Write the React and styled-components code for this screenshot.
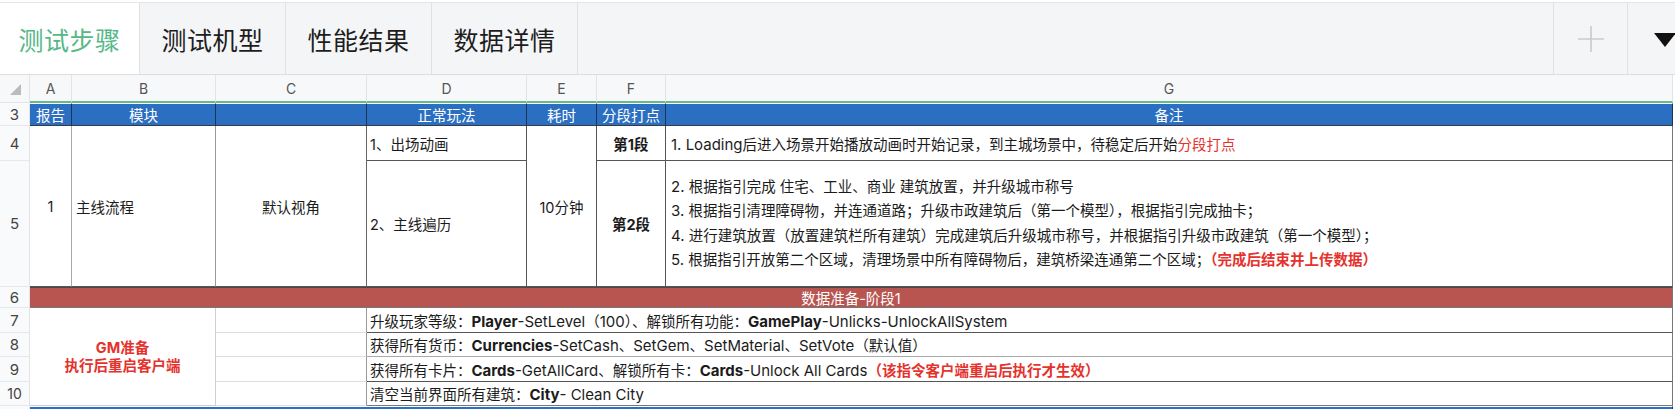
import React from 'react';
import styled, { createGlobalStyle } from 'styled-components';

const GlobalStyle = createGlobalStyle`
  html, body {
    margin: 0;
    padding: 0;
    background: #fff;
  }
  body {
    font-family: Inter, "Noto Sans CJK SC", sans-serif;
    overflow: hidden;
  }
`;

const Page = styled.div`
  width: 1675px;
  height: 409px;
  overflow: hidden;
  background: #fff;
  padding-top: 2px;
  box-sizing: border-box;
`;

/* ---------- sheet tabs ---------- */

const TabBar = styled.div`
  display: flex;
  height: 73px;
  box-sizing: border-box;
  border-top: 1px solid #e4e5e7;
  border-bottom: 1px solid #dcdddf;
  background: #f4f5f7;
`;

const Tab = styled.div`
  width: ${p => p.$w}px;
  flex: none;
  box-sizing: border-box;
  display: flex;
  align-items: center;
  justify-content: center;
  border-right: 1px solid #e0e1e4;
  background: ${p => (p.$active ? '#fff' : '#f4f5f7')};
  color: ${p => (p.$active ? '#55b888' : '#1d1d1d')};
  font-family: "Noto Sans CJK SC", sans-serif;
  font-size: 25px;
  letter-spacing: 0.5px;
`;

const TabFill = styled.div`
  flex: 1;
  border-right: 1px solid #e0e1e4;
`;

const AddTab = styled.div`
  width: 74px;
  flex: none;
  box-sizing: border-box;
  border-right: 1px solid #e0e1e4;
  display: flex;
  align-items: center;
  justify-content: center;
`;

const MenuTab = styled.div`
  width: 47px;
  flex: none;
  display: flex;
  align-items: center;
  padding-left: 26px;
  box-sizing: border-box;
`;

const DownArrow = styled.div`
  width: 0;
  height: 0;
  border-left: 11px solid transparent;
  border-right: 11px solid transparent;
  border-top: 14px solid #111;
  margin-top: 2px;
`;

/* ---------- grid ---------- */

const Sheet = styled.div`
  display: grid;
  grid-template-columns: 30px 42px 144px 151px 160px 70px 69px 1007px;
  grid-template-rows: 28px 23px 35px 126px 21px 25px 24px 25px 24px 24px;
  font-size: 14.5px;
  color: #1b1b1b;
`;

const Corner = styled.div`
  grid-column: 1;
  grid-row: 1;
  background: #f7f8fa;
  border-right: 1px solid #e3e4e6;
  border-bottom: 1px solid #e3e4e6;
  display: flex;
  align-items: flex-end;
  justify-content: flex-end;
  padding: 0 8px 7px 0;
  box-sizing: border-box;
`;

const CornerMark = styled.div`
  width: 0;
  height: 0;
  border-left: 11px solid transparent;
  border-bottom: 11px solid #b9bbbe;
`;

const ColHead = styled.div`
  grid-column: ${p => p.$c};
  grid-row: 1;
  background: #f7f8fa;
  border-right: 1px solid #e3e4e6;
  border-bottom: 2px solid #66bb8e;
  box-sizing: border-box;
  display: flex;
  align-items: center;
  justify-content: center;
  color: #555;
  font-size: 14px;
`;

const RowNum = styled.div`
  grid-column: 1;
  grid-row: ${p => p.$r};
  background: #f9fafb;
  border-right: 1px solid #e3e4e6;
  border-bottom: 1px solid #e6e7e9;
  box-sizing: border-box;
  display: flex;
  align-items: center;
  justify-content: center;
  color: #444;
  font-size: ${p => (p.$small ? '14px' : '15px')};
`;

const Cell = styled.div`
  grid-column: ${p => p.$c};
  grid-row: ${p => p.$r};
  box-sizing: border-box;
  display: flex;
  flex-direction: column;
  justify-content: center;
  align-items: ${p => (p.$center ? 'center' : 'flex-start')};
  text-align: ${p => (p.$center ? 'center' : 'left')};
  padding-left: ${p => p.$pl || 0}px;
  background: ${p => p.$bg || '#fff'};
  color: ${p => p.$color || '#1b1b1b'};
  font-weight: ${p => (p.$bold ? 700 : 400)};
  border-right: 1px solid ${p => p.$br || '#555'};
  border-bottom: 1px solid ${p => p.$bb || '#555'};
  white-space: nowrap;
  overflow: hidden;
`;

const HeadCell = styled(Cell)`
  background: #2b6fc3;
  color: #fff;
  border-top: 1px solid #fff;
  border-right-color: #1e3552;
  border-bottom-color: #3a3a3a;
`;

const Band = styled(Cell)`
  background: ${p => p.$bg};
  color: #fff;
  border-top: 1px solid #4a4a4a;
  border-bottom-color: #777;
  border-right-color: #777;
`;

const Lines = styled.div`
  line-height: ${p => p.$lh || 24.5}px;
`;

const Red = styled.span`
  color: #e5322d;
  font-weight: ${p => (p.$bold ? 700 : 400)};
`;

// latin runs render a little larger than the CJK text in the sheet
const En = styled.span`
  font-size: 15px;
`;

const B = styled.b`
  font-size: 15px;
  font-weight: 700;
`;

const tabs = ['测试步骤', '测试机型', '性能结果', '数据详情'];
const cols = ['A', 'B', 'C', 'D', 'E', 'F', 'G'];

const gmRows = [
  {
    r: 6,
    bb: '#555',
    text: (
      <>
        升级玩家等级：<B>Player</B><En>-SetLevel</En>（<En>100</En>）、解锁所有功能：<B>GamePlay</B>
        <En>-Unlicks-UnlockAllSystem</En>
      </>
    ),
  },
  {
    r: 7,
    bb: '#aaa',
    text: (
      <>
        获得所有货币：<B>Currencies</B><En>-SetCash</En>、<En>SetGem</En>、<En>SetMaterial</En>、
        <En>SetVote</En>（默认值）
      </>
    ),
  },
  {
    r: 8,
    bb: '#555',
    text: (
      <>
        获得所有卡片：<B>Cards</B><En>-GetAllCard</En>、解锁所有卡：<B>Cards</B><En>-Unlock All Cards</En>
        <Red $bold>（该指令客户端重启后执行才生效）</Red>
      </>
    ),
  },
  {
    r: 9,
    bb: '#777',
    text: (
      <>
        清空当前界面所有建筑：<B>City</B><En>- Clean City</En>
      </>
    ),
  },
];

export default function App() {
  return (
    <Page>
      <GlobalStyle />
      <TabBar>
        {tabs.map((t, i) => (
          <Tab key={t} $w={i === 0 ? 140 : 146} $active={i === 0}>
            {t}
          </Tab>
        ))}
        <TabFill />
        <AddTab>
          <svg width="28" height="28" viewBox="0 0 28 28">
            <path d="M14 1v26M1 14h26" stroke="#c9cacc" strokeWidth="1.6" fill="none" />
          </svg>
        </AddTab>
        <MenuTab>
          <DownArrow />
        </MenuTab>
      </TabBar>

      <Sheet>
        <Corner>
          <CornerMark />
        </Corner>
        {cols.map((c, i) => (
          <ColHead key={c} $c={i + 2}>
            {c}
          </ColHead>
        ))}

        {['3', '4', '5', '6', '7', '8', '9', '10', ''].map((n, i) => (
          <RowNum key={i} $r={i + 2} $small={n === '10'}>
            {n}
          </RowNum>
        ))}

        {/* row 3: header */}
        <HeadCell $c={2} $r={2} $center>报告</HeadCell>
        <HeadCell $c={3} $r={2} $center>模块</HeadCell>
        <HeadCell $c={4} $r={2} $center />
        <HeadCell $c={5} $r={2} $center>正常玩法</HeadCell>
        <HeadCell $c={6} $r={2} $center>耗时</HeadCell>
        <HeadCell $c={7} $r={2} $center>分段打点</HeadCell>
        <HeadCell $c={8} $r={2} $center>备注</HeadCell>

        {/* rows 4-5 */}
        <Cell $c={2} $r="3 / 5" $center $br="#a8a8a8" $bb="#555">1</Cell>
        <Cell $c={3} $r="3 / 5" $pl={4} $br="#999" $bb="#555">主线流程</Cell>
        <Cell $c={4} $r="3 / 5" $center $br="#666" $bb="#555">默认视角</Cell>
        <Cell $c={5} $r={3} $pl={3}>1、出场动画</Cell>
        <Cell $c={5} $r={4} $pl={3}>2、主线遍历</Cell>
        <Cell $c={6} $r="3 / 5" $center>10分钟</Cell>
        <Cell $c={7} $r={3} $center $bold>第1段</Cell>
        <Cell $c={7} $r={4} $center $bold>第2段</Cell>
        <Cell $c={8} $r={3} $pl={5} $br="#777">
          <div>
            <En>1. Loading</En>后进入场景开始播放动画时开始记录，到主城场景中，待稳定后开始<Red>分段打点</Red>
          </div>
        </Cell>
        <Cell $c={8} $r={4} $pl={5} $br="#777">
          <Lines>
            <div><En>2. </En>根据指引完成 住宅、工业、商业 建筑放置，并升级城市称号</div>
            <div><En>3. </En>根据指引清理障碍物，并连通道路；升级市政建筑后（第一个模型），根据指引完成抽卡；</div>
            <div><En>4. </En>进行建筑放置（放置建筑栏所有建筑）完成建筑后升级城市称号，并根据指引升级市政建筑（第一个模型）；</div>
            <div>
              <En>5. </En>根据指引开放第二个区域，清理场景中所有障碍物后，建筑桥梁连通第二个区域；
              <Red $bold>（完成后结束并上传数据）</Red>
            </div>
          </Lines>
        </Cell>

        {/* row 6: section band */}
        <Band $c="2 / 9" $r={5} $center $bg="#b95551">数据准备-阶段1</Band>

        {/* rows 7-10 */}
        <Cell $c="2 / 4" $r="6 / 10" $center $bold $color="#e5322d" $br="#cfcfcf" $bb="#cfcfcf">
          <Lines $lh={18}>
            <div>GM准备</div>
            <div>执行后重启客户端</div>
          </Lines>
        </Cell>
        {gmRows.map(row => (
          <React.Fragment key={row.r}>
            <Cell $c={4} $r={row.r} $br="#999" $bb="#dedede" />
            <Cell $c="5 / 9" $r={row.r} $pl={3} $br="#777" $bb={row.bb}>
              <div>{row.text}</div>
            </Cell>
          </React.Fragment>
        ))}

        {/* row 11, cut off */}
        <HeadCell $c="2 / 9" $r={10} />
      </Sheet>
    </Page>
  );
}
